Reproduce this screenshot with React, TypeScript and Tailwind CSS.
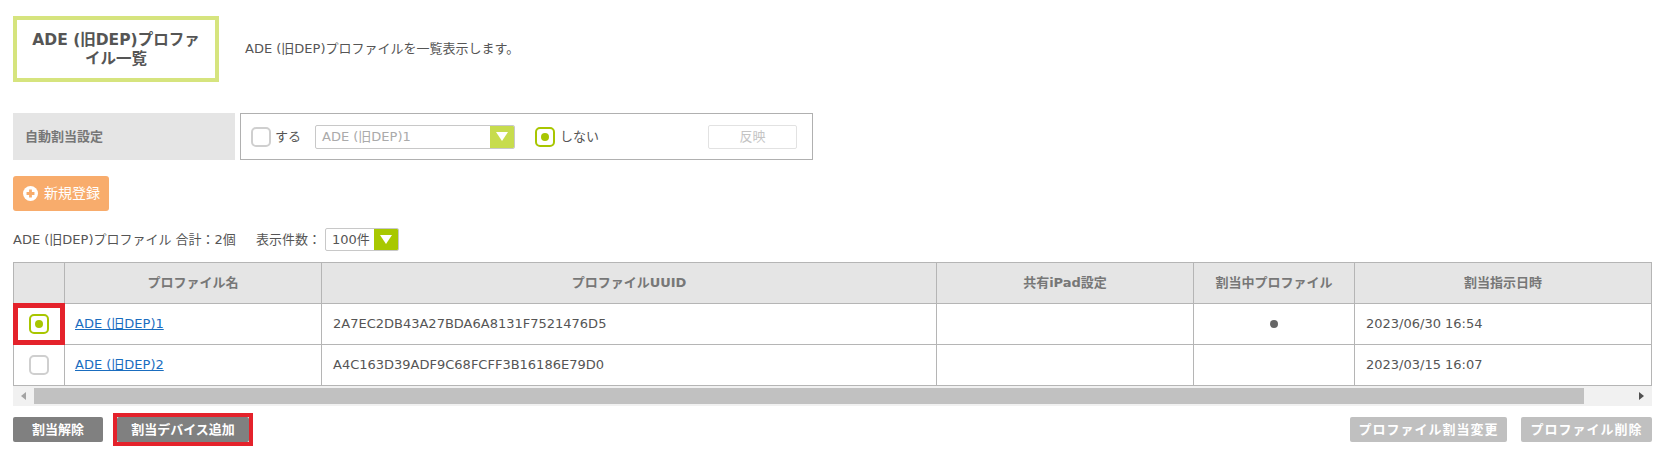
import React from "react";

const font = "font-['DejaVu_Sans','Noto_Sans_CJK_JP',sans-serif]";

function Check({ checked }: { checked?: boolean }) {
  return checked ? (
    <span className="flex h-[20px] w-[20px] items-center justify-center rounded-[5px] border-2 border-[#a8c600] bg-white">
      <span className="h-[8px] w-[8px] rounded-full bg-[#a8c600]" />
    </span>
  ) : (
    <span className="h-[20px] w-[20px] rounded-[5px] border-2 border-[#cfcfcf] bg-white" />
  );
}

function Caret() {
  return (
    <svg width="12" height="9" viewBox="0 0 12 9">
      <path d="M0 0 H12 L6 9 Z" fill="#fff" />
    </svg>
  );
}

function Select({ label, w, h, dim }: { label: string; w: string; h: string; dim?: boolean }) {
  return (
    <div className={`flex overflow-hidden rounded-[2px] border border-[#c8c8c8] bg-white ${w} ${h}`}>
      <span className={`flex flex-1 items-center pl-[6px] ${dim ? "text-[#aaaaaa]" : "text-[#555]"}`}>{label}</span>
      <span className={`flex w-[24px] items-center justify-center ${dim ? "bg-[#c7dc4d]" : "bg-[#a8c800]"}`}>
        <Caret />
      </span>
    </div>
  );
}

const rows = [
  { name: "ADE (旧DEP)1", uuid: "2A7EC2DB43A27BDA6A8131F7521476D5", active: true, date: "2023/06/30 16:54", checked: true },
  { name: "ADE (旧DEP)2", uuid: "A4C163D39ADF9C68FCFF3B16186E79D0", active: false, date: "2023/03/15 16:07", checked: false },
];

export default function App() {
  return (
    <div className={`${font} min-h-[451px] bg-white pl-[13px] pr-[8px] pt-[16px] text-[13px] text-[#555]`}>
      {/* title */}
      <div className="flex items-center">
        <div className="flex h-[66px] w-[206px] items-center justify-center border-4 border-[#d6e47e] text-center text-[15.5px] font-bold leading-[19px] text-[#555]">
          <span className="pt-[2px]">
            ADE (旧DEP)プロファ
            <br />
            イル一覧
          </span>
        </div>
        <p className="ml-[26px]">ADE (旧DEP)プロファイルを一覧表示します。</p>
      </div>

      {/* auto assign setting */}
      <div className="mt-[31px] flex h-[47px]">
        <div className="flex w-[222px] items-center bg-[#e5e5e5] pl-[12px] font-bold text-[#777]">自動割当設定</div>
        <div className="ml-[5px] flex w-[573px] items-center border border-[#b0b0b0] pl-[10px] pr-[15px]">
          <Check />
          <span className="ml-[4px]">する</span>
          <div className="ml-[14px]">
            <Select label="ADE (旧DEP)1" w="w-[200px]" h="h-[24px]" dim />
          </div>
          <div className="ml-[20px]">
            <Check checked />
          </div>
          <span className="ml-[5px]">しない</span>
          <button className="ml-auto h-[24px] w-[89px] rounded-[2px] border border-[#e2e2e2] bg-white text-[#c4c4c4]">反映</button>
        </div>
      </div>

      {/* new */}
      <button className="mt-[16px] flex h-[35px] w-[96px] items-center gap-[6px] rounded-[3px] bg-[#f8ac6c] pl-[10px] text-[14px] text-white">
        <svg width="15" height="15" viewBox="0 0 14 14">
          <circle cx="7" cy="7" r="7" fill="#fff" />
          <path d="M7 3.3 V10.7 M3.3 7 H10.7" stroke="#f8ac6c" strokeWidth="2.6" />
        </svg>
        新規登録
      </button>

      {/* summary */}
      <div className="mt-[17px] flex h-[23px] items-center">
        <span>ADE (旧DEP)プロファイル 合計：2個</span>
        <span className="ml-[20px]">表示件数：</span>
        <div className="ml-[4px]">
          <Select label="100件" w="w-[74px]" h="h-[23px]" />
        </div>
      </div>

      {/* table */}
      <table className="mt-[11px] w-full table-fixed border-collapse">
        <colgroup>
          <col className="w-[51px]" />
          <col className="w-[257px]" />
          <col className="w-[615px]" />
          <col className="w-[257px]" />
          <col className="w-[161px]" />
          <col />
        </colgroup>
        <thead>
          <tr className="bg-[#e5e5e5] font-bold text-[#777]">
            <th className="h-[41px] border border-[#b5b5b5]" />
            <th className="border border-[#b5b5b5]">プロファイル名</th>
            <th className="border border-[#b5b5b5]">プロファイルUUID</th>
            <th className="border border-[#b5b5b5]">共有iPad設定</th>
            <th className="border border-[#b5b5b5]">割当中プロファイル</th>
            <th className="border border-[#b5b5b5]">割当指示日時</th>
          </tr>
        </thead>
        <tbody>
          {rows.map((r) => (
            <tr key={r.uuid}>
              <td className="relative h-[41px] border border-[#b5b5b5]">
                <div className="flex justify-center">
                  <Check checked={r.checked} />
                </div>
                {r.checked && <div className="absolute -inset-[1px] border-[5px] border-[#e4222b]" />}
              </td>
              <td className="border border-[#b5b5b5] px-[10px]">
                <a className="text-[#1a6dbf] underline">{r.name}</a>
              </td>
              <td className="border border-[#b5b5b5] px-[11px]">{r.uuid}</td>
              <td className="border border-[#b5b5b5]" />
              <td className="border border-[#b5b5b5]">
                {r.active && <div className="mx-auto h-[8px] w-[8px] rounded-full bg-[#666]" />}
              </td>
              <td className="border border-[#b5b5b5] px-[11px]">{r.date}</td>
            </tr>
          ))}
        </tbody>
      </table>

      {/* horizontal scrollbar */}
      <div className="flex h-[20px] items-center bg-[#f1f1f1]">
        <span className="flex w-[21px] justify-center">
          <svg width="5" height="8" viewBox="0 0 5 8">
            <path d="M5 0 V8 L0 4 Z" fill="#a3a3a3" />
          </svg>
        </span>
        <span className="h-[16px] w-[1550px] bg-[#c1c1c1]" />
        <span className="flex flex-1 justify-end pr-[8px]">
          <svg width="5" height="8" viewBox="0 0 5 8">
            <path d="M0 0 V8 L5 4 Z" fill="#505050" />
          </svg>
        </span>
      </div>

      {/* actions */}
      <div className="mt-[11px] flex items-center justify-between">
        <div className="flex gap-[14px]">
          <button className="h-[25px] w-[90px] rounded-[2px] bg-[#808080] font-bold text-white">割当解除</button>
          <div className="relative">
            <button className="h-[25px] w-[132px] rounded-[2px] bg-[#808080] font-bold text-white">割当デバイス追加</button>
            <span className="absolute -inset-[4px] border-4 border-[#e4222b]" />
          </div>
        </div>
        <div className="flex gap-[14px]">
          <button className="h-[25px] w-[157px] rounded-[2px] bg-[#c0c0c0] font-bold tracking-[1px] text-white">プロファイル割当変更</button>
          <button className="h-[25px] w-[131px] rounded-[2px] bg-[#c0c0c0] font-bold tracking-[1px] text-white">プロファイル削除</button>
        </div>
      </div>
    </div>
  );
}
